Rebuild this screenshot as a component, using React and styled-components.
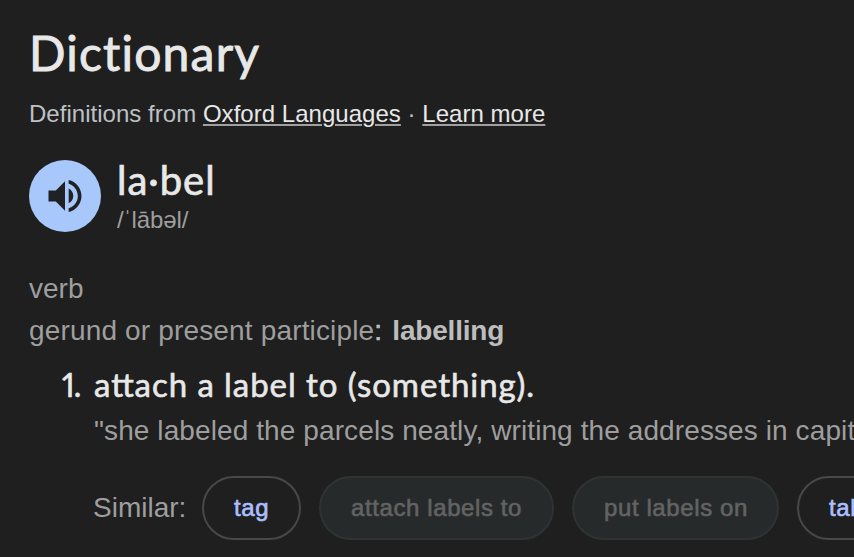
import React from 'react';
import styled, { createGlobalStyle } from 'styled-components';

const GlobalStyle = createGlobalStyle`
  body {
    margin: 0;
    background-color: #1f1f1f;
    font-family: 'Liberation Sans', Arial, sans-serif;
    overflow: hidden;
  }
`;

const similarWords = [
  { id: 1, text: 'tag', width: '99px' },
  { id: 2, text: 'attach labels to', width: '235px', disabled: true },
  { id: 3, text: 'put labels on', width: '207px', disabled: true },
  { id: 4, text: 'tabulate', width: 'auto' },
];

function App() {
  return (
    <>
      <GlobalStyle />
      <StContainer>
        <StTitle>Dictionary</StTitle>
        <StSource>
          Definitions from <StLink href="#">Oxford Languages</StLink> ·{' '}
          <StLink href="#">Learn more</StLink>
        </StSource>

        <StWordRow>
          <StSoundButton aria-label="Listen">
            <svg width="44" height="44" viewBox="0 0 24 24" fill="#202124">
              <path d="M3 9v6h4l5 5V4L7 9H3z" />
              <path d="M16.5 12c0-1.77-1.02-3.29-2.5-4.03v8.05c1.48-.73 2.5-2.25 2.5-4.02z" />
              <path d="M14 3.23v2.06c2.89.86 5 3.54 5 6.71s-2.11 5.85-5 6.71v2.06c4.01-.91 7-4.49 7-8.77s-2.99-7.86-7-8.77z" />
            </svg>
          </StSoundButton>
          <div>
            <StWord>la·bel</StWord>
            <StPhonetic>/ˈlābəl/</StPhonetic>
          </div>
        </StWordRow>

        <StPartOfSpeech>verb</StPartOfSpeech>
        <StForm>
          gerund or present participle<StColon>: </StColon>
          <b>labelling</b>
        </StForm>

        <StMeaning>
          <StNumber>1.</StNumber>
          <div>
            <StDefinition>attach a label to (something).</StDefinition>
            <StExample>
              "she labeled the parcels neatly, writing the addresses in capitals"
            </StExample>
            <StSimilarRow>
              <StSimilarLabel>Similar:</StSimilarLabel>
              {similarWords.map((item) => {
                return (
                  <StChip key={item.id} $width={item.width} disabled={item.disabled}>
                    {item.text}
                  </StChip>
                );
              })}
            </StSimilarRow>
          </div>
        </StMeaning>
      </StContainer>
    </>
  );
}

const StContainer = styled.div`
  box-sizing: border-box;
  width: 100vw;
  height: 557px;
  padding: 23px 0 0 29px;
  overflow: hidden;
  white-space: nowrap;
  color: #9e9e9e;
`;

const StTitle = styled.h1`
  margin: 0;
  font-family: Lato, sans-serif;
  font-size: 48px;
  font-weight: 400;
  line-height: 60px;
  letter-spacing: 1.2px;
  color: #e8e8e8;
  -webkit-text-stroke: 0.9px currentColor;
`;

const StSource = styled.div`
  margin-top: 17px;
  font-size: 24px;
  line-height: 28px;
  letter-spacing: 0.03px;
  color: #bdc1c6;
`;

const StLink = styled.a`
  color: #e8e8e8;
  text-decoration: underline;
  text-decoration-color: #a0a0a0;
  text-decoration-thickness: 2px;
  text-underline-offset: 2px;
`;

const StWordRow = styled.div`
  display: flex;
  margin-top: 32px;
  gap: 16px;
`;

const StSoundButton = styled.button`
  display: flex;
  justify-content: center;
  align-items: center;
  width: 72px;
  height: 72px;
  padding: 0;
  border: none;
  border-radius: 50%;
  background-color: #a8c7fa;
  cursor: pointer;
`;

const StWord = styled.div`
  font-family: Lato, sans-serif;
  font-size: 40px;
  line-height: 40px;
  letter-spacing: 1px;
  color: #e8e8e8;
  -webkit-text-stroke: 0.7px currentColor;
`;

const StPhonetic = styled.div`
  margin-top: 5px;
  font-size: 24px;
  line-height: 30px;
  letter-spacing: -0.1px;
`;

const StPartOfSpeech = styled.div`
  margin-top: 36px;
  font-size: 28px;
  line-height: 36px;
`;

const StForm = styled.div`
  margin-top: 6px;
  font-size: 28px;
  line-height: 36px;
  letter-spacing: 0.16px;

  b {
    letter-spacing: -0.2px;
    color: #bdbdbd;
  }
`;

const StColon = styled.span`
  letter-spacing: 1.2px;
  color: #bdc1c6;
  -webkit-text-stroke: 0.6px currentColor;
`;

const StMeaning = styled.div`
  display: flex;
  margin-top: 15px;
`;

const StNumber = styled.div`
  flex-shrink: 0;
  width: 32px;
  margin-left: 33px;
  font-family: Lato, sans-serif;
  font-size: 32px;
  font-feature-settings: 'pnum';
  line-height: 42px;
  letter-spacing: -1px;
  color: #e8e8e8;
  -webkit-text-stroke: 0.6px currentColor;
`;

const StDefinition = styled.div`
  font-family: Lato, sans-serif;
  font-size: 33px;
  font-feature-settings: 'liga';
  line-height: 40px;
  letter-spacing: 0.94px;
  color: #e8e8e8;
  -webkit-text-stroke: 0.6px currentColor;
`;

const StExample = styled.div`
  margin-top: 9px;
  font-size: 28px;
  line-height: 36px;
  letter-spacing: 0.1px;
`;

const StSimilarRow = styled.div`
  display: flex;
  align-items: center;
  margin-top: 27px;
  margin-left: -1px;
`;

const StSimilarLabel = styled.div`
  flex-shrink: 0;
  width: 109px;
  font-size: 28px;
`;

const StChip = styled.button`
  box-sizing: border-box;
  flex-shrink: 0;
  width: ${(props) => props.$width};
  height: 64px;
  margin-right: 18px;
  padding: 0 30px;
  border: 2px solid ${(props) => (props.disabled ? '#303333' : '#484848')};
  border-radius: 32px;
  background-color: ${(props) => (props.disabled ? '#272a2b' : 'transparent')};
  color: ${(props) => (props.disabled ? '#636363' : '#adc0ff')};
  font-family: 'Liberation Sans', Arial, sans-serif;
  font-size: 24px;
  letter-spacing: 0.6px;
  -webkit-text-stroke: 0.6px currentColor;
`;

export default App;
